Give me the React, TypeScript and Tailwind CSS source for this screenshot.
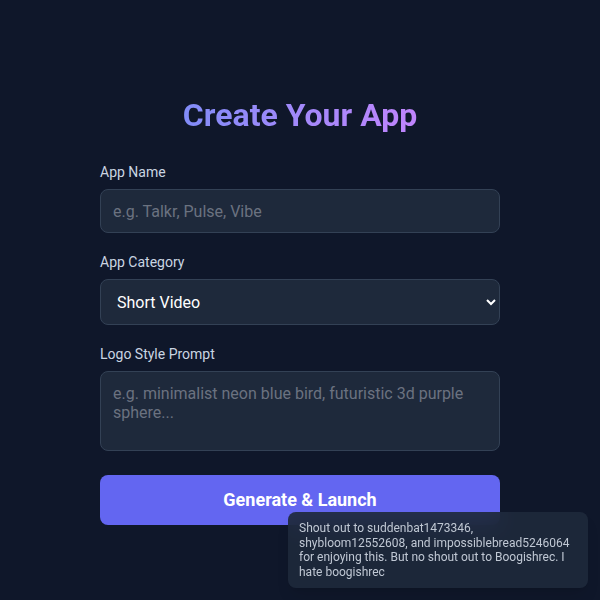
import React, { useState } from 'react';

export default function App() {
    const [name, setName] = useState('');
    const [category, setCategory] = useState('Short Video');
    const [prompt, setPrompt] = useState('');

    return (
        <div className="min-h-screen bg-[#0f172a] text-white font-['Roboto',sans-serif] relative">
            <div className="w-[400px] mx-auto pt-[96px]">
                {/* Title */}
                <h1 className="text-[32px] leading-[38px] font-bold text-center mb-[28px]">
                    <span className="bg-gradient-to-r from-[#818cf8] to-[#c084fc] bg-clip-text text-transparent">
                        Create Your App
                    </span>
                </h1>

                {/* App Name */}
                <label className="block text-sm leading-5 text-slate-300 mb-[7px]">App Name</label>
                <input
                    type="text"
                    value={name}
                    onChange={e => setName(e.target.value)}
                    placeholder="e.g. Talkr, Pulse, Vibe"
                    className="w-full h-[44px] px-3 bg-[#1e293b] border border-[#334155] rounded-lg text-base text-white placeholder:text-[#6b7280] focus:outline-none mb-[19px]"
                />

                {/* App Category */}
                <label className="block text-sm leading-5 text-slate-300 mb-[7px]">App Category</label>
                <select
                    value={category}
                    onChange={e => setCategory(e.target.value)}
                    className="w-full h-[46px] px-3 bg-[#1e293b] border border-[#334155] rounded-lg text-base text-white focus:outline-none mb-[19px]"
                >
                    <option>Short Video</option>
                    <option>Social</option>
                    <option>Messaging</option>
                    <option>Music</option>
                </select>

                {/* Logo Style Prompt */}
                <label className="block text-sm leading-5 text-slate-300 mb-[7px]">Logo Style Prompt</label>
                <textarea
                    value={prompt}
                    onChange={e => setPrompt(e.target.value)}
                    placeholder="e.g. minimalist neon blue bird, futuristic 3d purple sphere..."
                    className="block w-full h-[80px] px-3 py-[12px] bg-[#1e293b] border border-[#334155] rounded-lg text-base leading-[19px] text-white placeholder:text-[#6b7280] resize-none focus:outline-none"
                />

                {/* CTA */}
                <button className="w-full h-[50px] mt-[24px] bg-[#6366f1] rounded-lg text-lg font-bold text-white">
                    Generate &amp; Launch
                </button>
            </div>

            {/* Shout-out toast */}
            <div className="fixed right-3 bottom-3 w-[300px] px-[11px] py-[9px] bg-[#1e293b]/90 backdrop-blur-md rounded-lg shadow-lg text-xs leading-[14.5px] text-[#c0c8d4]">
                Shout out to suddenbat1473346, shybloom12552608, and impossiblebread5246064 for enjoying this. But no shout out to Boogishrec. I hate boogishrec
            </div>
        </div>
    );
}
